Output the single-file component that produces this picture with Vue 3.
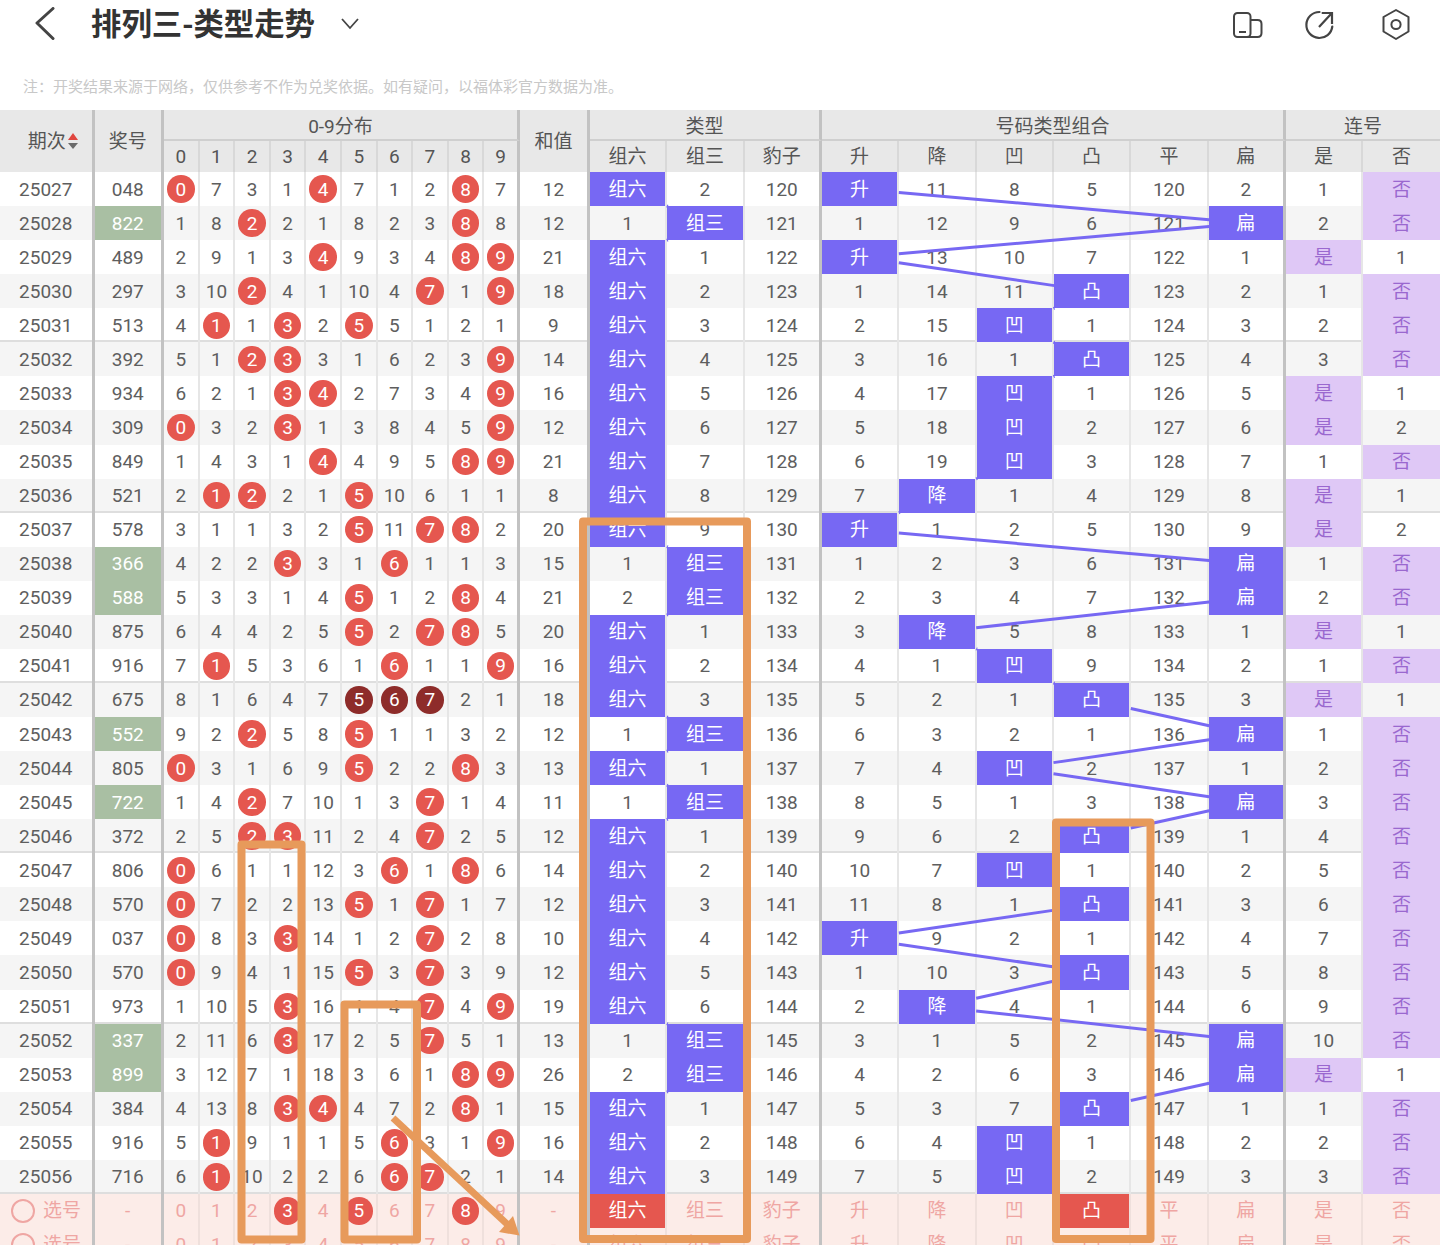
<script setup>
import { computed } from 'vue'

// 列宽，和样式里的 grid 模板保持一致
const C1 = 94.5, C2 = 69.5, CD = 35.6, CS = 70, CT = 77.33
const TOP = 172, RH = 34.07
const typeX = C1 + C2 + CD * 10 + CS
const comboX = typeX + CT * 3

// 每期：期次 奖号 0-9遗漏 和值 组六列 组三列 组合6列 连号2列
const rows = [
  ['25027','048','0 7 3 1 4 7 1 2 8 7',12,'* 2','* 11 8 5 120 2','1 *'],
  ['25028','822','1 8 2 2 1 8 2 3 8 8',12,'1 *','1 12 9 6 121 *','2 *'],
  ['25029','489','2 9 1 3 4 9 3 4 8 9',21,'* 1','* 13 10 7 122 1','* 1'],
  ['25030','297','3 10 2 4 1 10 4 7 1 9',18,'* 2','1 14 11 * 123 2','1 *'],
  ['25031','513','4 1 1 3 2 5 5 1 2 1',9,'* 3','2 15 * 1 124 3','2 *'],
  ['25032','392','5 1 2 3 3 1 6 2 3 9',14,'* 4','3 16 1 * 125 4','3 *'],
  ['25033','934','6 2 1 3 4 2 7 3 4 9',16,'* 5','4 17 * 1 126 5','* 1'],
  ['25034','309','0 3 2 3 1 3 8 4 5 9',12,'* 6','5 18 * 2 127 6','* 2'],
  ['25035','849','1 4 3 1 4 4 9 5 8 9',21,'* 7','6 19 * 3 128 7','1 *'],
  ['25036','521','2 1 2 2 1 5 10 6 1 1',8,'* 8','7 * 1 4 129 8','* 1'],
  ['25037','578','3 1 1 3 2 5 11 7 8 2',20,'* 9','* 1 2 5 130 9','* 2'],
  ['25038','366','4 2 2 3 3 1 6 1 1 3',15,'1 *','1 2 3 6 131 *','1 *'],
  ['25039','588','5 3 3 1 4 5 1 2 8 4',21,'2 *','2 3 4 7 132 *','2 *'],
  ['25040','875','6 4 4 2 5 5 2 7 8 5',20,'* 1','3 * 5 8 133 1','* 1'],
  ['25041','916','7 1 5 3 6 1 6 1 1 9',16,'* 2','4 1 * 9 134 2','1 *'],
  ['25042','675','8 1 6 4 7 5 6 7 2 1',18,'* 3','5 2 1 * 135 3','* 1'],
  ['25043','552','9 2 2 5 8 5 1 1 3 2',12,'1 *','6 3 2 1 136 *','1 *'],
  ['25044','805','0 3 1 6 9 5 2 2 8 3',13,'* 1','7 4 * 2 137 1','2 *'],
  ['25045','722','1 4 2 7 10 1 3 7 1 4',11,'1 *','8 5 1 3 138 *','3 *'],
  ['25046','372','2 5 2 3 11 2 4 7 2 5',12,'* 1','9 6 2 * 139 1','4 *'],
  ['25047','806','0 6 1 1 12 3 6 1 8 6',14,'* 2','10 7 * 1 140 2','5 *'],
  ['25048','570','0 7 2 2 13 5 1 7 1 7',12,'* 3','11 8 1 * 141 3','6 *'],
  ['25049','037','0 8 3 3 14 1 2 7 2 8',10,'* 4','* 9 2 1 142 4','7 *'],
  ['25050','570','0 9 4 1 15 5 3 7 3 9',12,'* 5','1 10 3 * 143 5','8 *'],
  ['25051','973','1 10 5 3 16 1 4 7 4 9',19,'* 6','2 * 4 1 144 6','9 *'],
  ['25052','337','2 11 6 3 17 2 5 7 5 1',13,'1 *','3 1 5 2 145 *','10 *'],
  ['25053','899','3 12 7 1 18 3 6 1 8 9',26,'2 *','4 2 6 3 146 *','* 1'],
  ['25054','384','4 13 8 3 4 4 7 2 8 1',15,'* 1','5 3 7 * 147 1','1 *'],
  ['25055','916','5 1 9 1 1 5 6 3 1 9',16,'* 2','6 4 * 1 148 2','2 *'],
  ['25056','716','6 1 10 2 2 6 6 7 2 1',14,'* 3','7 5 * 2 149 3','3 *'],
]

const typeNames = ['组六', '组三', '豹子']
const comboNames = ['升', '降', '凹', '凸', '平', '扁']
const linkNames = ['是', '否']
const digits = [0, 1, 2, 3, 4, 5, 6, 7, 8, 9]

const table = rows.map((r, idx) => {
  const num = r[1]
  const set = num.split('')
  return {
    issue: r[0],
    num,
    pair: new Set(set).size < 3,
    dist: r[2].split(' ').map((v, d) => ({ v, hit: set.includes(String(d)) })),
    // 顺子那期用深色球
    straight: num === '675',
    sum: r[3],
    types: [...r[4].split(' '), String(120 + idx)],
    combos: r[5].split(' '),
    links: r[6].split(' '),
  }
})

const selDigits = [3, 5, 8]

// 裁掉落在命中格子里的那段，只画格子之间的折线
function clip(x1, y1, x2, y2, hw, hh) {
  const dx = x2 - x1, dy = y2 - y1
  const t = Math.min(dx ? hw / Math.abs(dx) : 1, dy ? hh / Math.abs(dy) : 1)
  return [x1 + dx * t, y1 + dy * t, x2 - dx * t, y2 - dy * t]
}

function trend(key, x0, w) {
  const out = []
  let prev = null
  table.forEach((r, i) => {
    const c = r[key].indexOf('*')
    if (prev && prev.c !== c) {
      const [x1, y1, x2, y2] = clip(
        x0 + w * (prev.c + 0.5), TOP + RH * (prev.i + 0.5),
        x0 + w * (c + 0.5), TOP + RH * (i + 0.5), w / 2 - 0.5, RH / 2)
      out.push({ x1, y1, x2, y2 })
    }
    prev = { c, i }
  })
  return out
}

const lines = computed(() => [...trend('types', typeX, CT), ...trend('combos', comboX, CT)])

const boxes = [
  { x: 241.5, y: 844.5, w: 60, h: 395 },
  { x: 344.5, y: 1004.5, w: 72.5, h: 235 },
  { x: 583, y: 521.5, w: 164, h: 717.5 },
  { x: 1056, y: 822.5, w: 94.5, h: 416.5 },
]
</script>

<template>
  <div class="page">
    <header class="topbar">
      <svg class="back" width="24" height="34" viewBox="0 0 24 34">
        <path d="M20 1.5 L4 16 L20 31.5" fill="none" stroke="#444" stroke-width="3" stroke-linecap="round" stroke-linejoin="round" />
      </svg>
      <h1 class="title">排列三-类型走势</h1>
      <svg class="caret" width="20" height="12" viewBox="0 0 20 12">
        <path d="M2 1 L10 10 L18 1" fill="none" stroke="#444" stroke-width="1.8" />
      </svg>
      <div class="tools">
        <svg width="32" height="30" viewBox="0 0 32 30">
          <rect x="2" y="4" width="16.5" height="24" rx="3.5" fill="none" stroke="#444" stroke-width="2" />
          <path d="M18.5 11 H25.5 Q29.5 11 29.5 15 V24 Q29.5 28 25.5 28 H14" fill="none" stroke="#444" stroke-width="2" />
          <path d="M7 23 H14" fill="none" stroke="#444" stroke-width="2" />
        </svg>
        <svg width="32" height="32" viewBox="0 0 32 32">
          <path d="M15.5 4 A13 13 0 1 0 28.3 18.5" fill="none" stroke="#444" stroke-width="2.2" stroke-linecap="round" />
          <path d="M15 19 L27.7 5.3 M17.7 5 H28 V16" fill="none" stroke="#444" stroke-width="2.2" />
        </svg>
        <svg class="hex" width="30" height="32" viewBox="0 0 30 32">
          <path d="M15 2 L27.5 9 V23.5 L15 31 L2.5 23.5 V9 Z" fill="none" stroke="#444" stroke-width="2" stroke-linejoin="round" />
          <circle cx="15" cy="16.5" r="4.6" fill="none" stroke="#444" stroke-width="2" />
        </svg>
      </div>
    </header>

    <p class="note">注：开奖结果来源于网络，仅供参考不作为兑奖依据。如有疑问，以福体彩官方数据为准。</p>

    <div class="thead">
      <div class="th span2 sep issue-h cjk">
        期次
        <span class="sort"><i class="up"></i><i class="down"></i></span>
      </div>
      <div class="th span2 sep cjk">奖号</div>
      <div class="th group sep" style="grid-column: span 10">0-9分布</div>
      <div class="th span2 sep cjk">和值</div>
      <div class="th group sep" style="grid-column: span 3">类型</div>
      <div class="th group sep" style="grid-column: span 6">号码类型组合</div>
      <div class="th group" style="grid-column: span 2">连号</div>

      <div v-for="d in digits" :key="'d' + d" class="th sub" :class="{ sep: d === 9 }">{{ d }}</div>
      <div v-for="(n, i) in typeNames" :key="n" class="th sub cjk" :class="{ sep: i === 2 }">{{ n }}</div>
      <div v-for="(n, i) in comboNames" :key="n" class="th sub cjk" :class="{ sep: i === 5 }">{{ n }}</div>
      <div v-for="n in linkNames" :key="n" class="th sub cjk">{{ n }}</div>
    </div>

    <div v-for="(r, i) in table" :key="r.issue" class="row" :class="{ alt: i % 2 === 1, five: i % 5 === 4 }">
      <div class="td sep">{{ r.issue }}</div>
      <div class="td sep" :class="{ green: r.pair }">{{ r.num }}</div>
      <div v-for="(d, k) in r.dist" :key="k" class="td" :class="{ sep: k === 9 }">
        <span v-if="d.hit" class="ball" :class="{ dark: r.straight }">{{ d.v }}</span>
        <template v-else>{{ d.v }}</template>
      </div>
      <div class="td sep">{{ r.sum }}</div>
      <div v-for="(v, k) in r.types" :key="'t' + k" class="td" :class="{ hit: v === '*', cjk: v === '*', sep: k === 2 }">
        {{ v === '*' ? typeNames[k] : v }}
      </div>
      <div v-for="(v, k) in r.combos" :key="'c' + k" class="td" :class="{ hit: v === '*', cjk: v === '*', sep: k === 5 }">
        {{ v === '*' ? comboNames[k] : v }}
      </div>
      <div v-for="(v, k) in r.links" :key="'l' + k" class="td" :class="{ lilac: v === '*', cjk: v === '*' }">
        {{ v === '*' ? linkNames[k] : v }}
      </div>
    </div>

    <div v-for="s in 2" :key="'s' + s" class="row pick">
      <div class="td sep pick-label"><span class="radio"></span><span class="cjk">选号</span></div>
      <div class="td sep">-</div>
      <div v-for="d in digits" :key="d" class="td" :class="{ sep: d === 9 }">
        <span v-if="s === 1 && selDigits.includes(d)" class="ball">{{ d }}</span>
        <template v-else>{{ d }}</template>
      </div>
      <div class="td sep">-</div>
      <div v-for="(n, k) in typeNames" :key="n" class="td cjk" :class="{ sep: k === 2, red: s === 1 && k === 0 }">{{ n }}</div>
      <div v-for="(n, k) in comboNames" :key="n" class="td cjk" :class="{ sep: k === 5, red: s === 1 && k === 3 }">{{ n }}</div>
      <div v-for="n in linkNames" :key="n" class="td cjk">{{ n }}</div>
    </div>

    <!-- 走势折线 -->
    <svg class="overlay" width="1440" height="1245" viewBox="0 0 1440 1245">
      <line v-for="(l, i) in lines" :key="i" :x1="l.x1" :y1="l.y1" :x2="l.x2" :y2="l.y2"
        stroke="#7768f3" stroke-width="3" />
    </svg>

    <!-- 截图上手工标注的橙色框和箭头 -->
    <svg class="overlay" width="1440" height="1245" viewBox="0 0 1440 1245">
      <rect v-for="(b, i) in boxes" :key="i" :x="b.x" :y="b.y" :width="b.w" :height="b.h"
        fill="none" stroke="#e79a5b" stroke-width="8" stroke-linejoin="round" />
      <line x1="393" y1="1118" x2="507" y2="1224" stroke="#e79a5b" stroke-width="7" />
      <polygon points="519.5,1235.5 499,1232 513,1216" fill="#e79a5b" />
    </svg>
  </div>
</template>

<style>
html, body { margin: 0; background: #fff; overflow: hidden; }
</style>

<style scoped>
.page {
  position: relative;
  width: 1440px;
  height: 1245px;
  overflow: hidden;
  background: #fff;
  color: #5e5e5e;
  font-family: Roboto, "Noto Sans CJK SC", sans-serif;
  font-size: 19px;
}
.topbar {
  display: flex;
  align-items: center;
  height: 48px;
  padding-left: 33px;
}
.back { margin-right: 34px; }
.title {
  margin: 0 25px 4px 0;
  font-family: "Noto Sans CJK SC", sans-serif;
  font-size: 30.4px;
  line-height: 40px;
  font-weight: 700;
  color: #333;
}
.tools {
  display: flex;
  align-items: center;
  gap: 40px;
  margin-left: auto;
  margin-right: 29.5px;
}
.hex { margin-left: 4.5px; }
.note {
  margin: 0;
  padding: 28px 0 0 23px;
  height: 34px;
  font-family: "Noto Sans CJK SC", sans-serif;
  font-size: 15px;
  line-height: 20px;
  color: #c8c8c8;
}
.thead, .row {
  display: grid;
  grid-template-columns: 94.5px 69.5px repeat(10, 35.6px) 70px repeat(3, 77.33px) repeat(6, 77.33px) repeat(2, 77px);
}
.thead {
  grid-template-rows: 31px 31px;
  background: #e8e8e8;
  color: #555;
}
.th {
  display: flex;
  align-items: center;
  justify-content: center;
  box-sizing: border-box;
  min-width: 0;
}
.span2 { grid-row: span 2; }
.group { border-bottom: 2px solid #cfcfcf; }
.sub { border-right: 2px solid #d8d8d8; }
.th.sep, .td.sep { border-right: 3px solid #c2c2c2; }
.sub:last-child { border-right: 0; }
/* 数字字体的基线让汉字偏低，抬一点 */
.cjk { padding-bottom: 4px; }
.issue-h { padding-left: 14px; }
.sort {
  display: inline-flex;
  flex-direction: column;
  gap: 3px;
  margin: 4px 0 0 2px;
}
.sort i {
  display: block;
  width: 0;
  height: 0;
  border-left: 5px solid transparent;
  border-right: 5px solid transparent;
}
.up { border-bottom: 7px solid #e0463f; }
.down { border-top: 6px solid #6a6a6a; }

.row {
  height: 34.07px;
  background: #fff;
}
.row.alt { background: #f5f5f5; }
.td {
  display: flex;
  align-items: center;
  justify-content: center;
  box-sizing: border-box;
  min-width: 0;
  border-right: 2px solid #e6e6e6;
  white-space: nowrap;
}
.row.five .td { box-shadow: inset 0 -2px 0 #dedede; }
.td:last-child { border-right: 0; }
.td.green { background: #a9bfa3; color: #fff; }
.td.hit { background: #7768f3; color: #fff; }
.td.lilac { background: #dfc8f6; color: #9a68cf; }
.row.five .td.hit, .row.five .td.lilac, .row.five .td.green { box-shadow: none; }
.ball {
  display: flex;
  align-items: center;
  justify-content: center;
  flex: none;
  width: 27.5px;
  height: 27.5px;
  border-radius: 50%;
  background: #e5574f;
  color: #fff;
}
.ball.dark { background: #8e2c2a; }
.row.pick { background: #fcece8; color: #efa6a3; }
.pick .td { border-right-color: #efe0dc; }
.pick .td.sep { border-right-color: #c2c2c2; }
.pick .td.red { background: #e5574f; color: #fff; }
.pick-label {
  justify-content: flex-start;
  gap: 8px;
  padding-left: 11px;
}
.radio {
  box-sizing: border-box;
  width: 24px;
  height: 24px;
  border: 2px solid #efa6a3;
  border-radius: 50%;
}
.overlay {
  position: absolute;
  left: 0;
  top: 0;
  pointer-events: none;
}
</style>
